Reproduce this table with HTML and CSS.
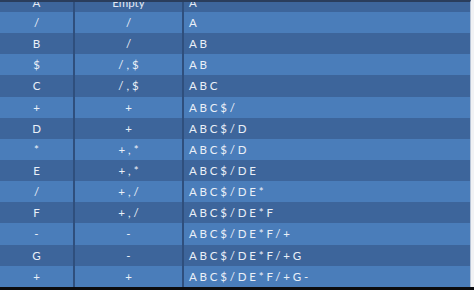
FILE: index.html
```html
<!DOCTYPE html>
<html>
<head>
<meta charset="utf-8">
<link rel="stylesheet" href="styles.css">
</head>
<body>
<div class="screen">
  <div class="sheet">
    <div class="grid">
      <div class="row head"><div class="c1">A</div><div class="c2">Empty</div><div class="c3">A</div></div>
      <div class="row light"><div class="c1">/</div><div class="c2">/</div><div class="c3">A</div></div>
      <div class="row dark"><div class="c1">B</div><div class="c2">/</div><div class="c3">AB</div></div>
      <div class="row light"><div class="c1">$</div><div class="c2">/ , $</div><div class="c3">AB</div></div>
      <div class="row dark"><div class="c1">C</div><div class="c2">/ , $</div><div class="c3">ABC</div></div>
      <div class="row light"><div class="c1">+</div><div class="c2">+</div><div class="c3">ABC$/</div></div>
      <div class="row dark"><div class="c1">D</div><div class="c2">+</div><div class="c3">ABC$/D</div></div>
      <div class="row light"><div class="c1">*</div><div class="c2">+ , *</div><div class="c3">ABC$/D</div></div>
      <div class="row dark"><div class="c1">E</div><div class="c2">+ , *</div><div class="c3">ABC$/DE</div></div>
      <div class="row light"><div class="c1">/</div><div class="c2">+ , /</div><div class="c3">ABC$/DE*</div></div>
      <div class="row dark"><div class="c1">F</div><div class="c2">+ , /</div><div class="c3">ABC$/DE*F</div></div>
      <div class="row light"><div class="c1">-</div><div class="c2">-</div><div class="c3">ABC$/DE*F/+</div></div>
      <div class="row dark"><div class="c1">G</div><div class="c2">-</div><div class="c3">ABC$/DE*F/+G</div></div>
      <div class="row light"><div class="c1">+</div><div class="c2">+</div><div class="c3">ABC$/DE*F/+G-</div></div>
    </div>
  </div>
</div>
</body>
</html>
```
FILE: styles.css
```css
html, body {
  margin: 0;
  padding: 0;
  background: #0c0c0e;
}
body {
  font-family: Lato, "Open Sans", sans-serif;
  font-size: 11.5px;
  color: #eaf0f8;
}
.screen {
  height: 287px;
  width: 474px;
  display: flex;
  background: #f2f3f5;
  overflow: hidden;
}
.sheet {
  width: 470px;
  border-top: 2px solid #2a3d5c;
  border-right: 1px solid #b9c6d8;
  overflow: hidden;
}
.grid {
  margin-top: -11.15px;
  display: grid;
  grid-template-columns: 75px 109px 1fr;
  grid-auto-rows: 21.15px;
}
.row {
  display: contents;
}
.row > div {
  display: flex;
  align-items: center;
  box-sizing: border-box;
}
.c1, .c2 {
  justify-content: center;
  border-right: 2px solid #2f4f7d;
}
.c3 {
  padding-left: 5px;
  letter-spacing: 2.8px;
}
.light > div {
  background: #4a7dba;
}
.dark > div, .head > div {
  background: #3d659b;
}
.head > div {
  color: #e3e9f3;
  padding-top: 3px;
}
```
